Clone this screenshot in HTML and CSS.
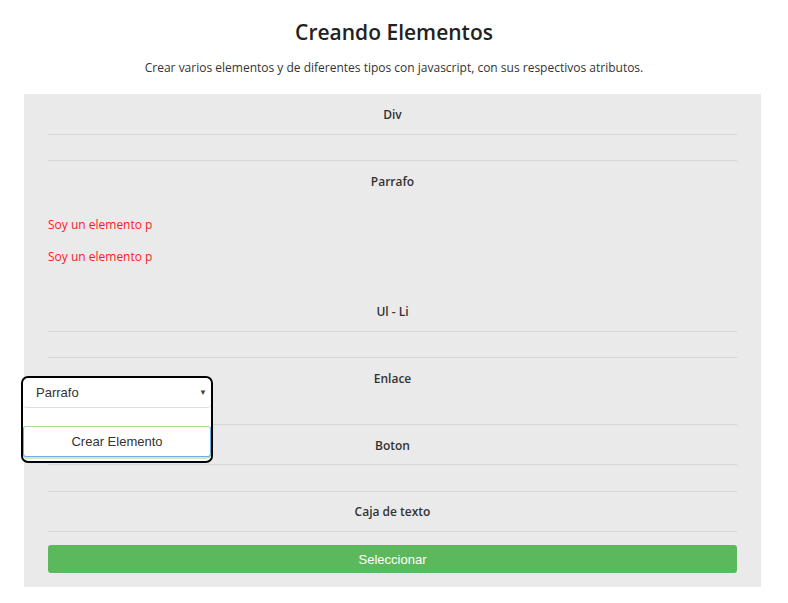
FILE: index.html
```html
<!DOCTYPE html>
<html lang="es">
<head>
<meta charset="utf-8">
<title>Creando Elementos</title>
<link rel="stylesheet" href="styles.css">
</head>
<body>
<header class="header">
  <h1 class="title">Creando Elementos</h1>
  <p class="subtitle">Crear varios elementos y de diferentes tipos con javascript, con sus respectivos atributos.</p>
</header>
<main class="panel">
  <section class="sec">
    <h2 class="sec-title">Div</h2>
    <div class="box-empty"></div>
  </section>
  <section class="sec">
    <h2 class="sec-title">Parrafo</h2>
    <div class="paras">
      <p class="red">Soy un elemento p</p>
      <p class="red">Soy un elemento p</p>
    </div>
  </section>
  <section class="sec sec-ul">
    <h2 class="sec-title">Ul - Li</h2>
    <div class="box-empty"></div>
  </section>
  <section class="sec">
    <h2 class="sec-title">Enlace</h2>
    <div class="enlace-space"></div>
  </section>
  <section class="sec sec-bordered">
    <h2 class="sec-title">Boton</h2>
    <div class="box-empty"></div>
  </section>
  <section class="sec sec-last">
    <h2 class="sec-title">Caja de texto</h2>
    <div class="rule"></div>
    <button class="btn-green" type="button">Seleccionar</button>
  </section>

  <div class="creator">
    <div class="select">
      <span>Parrafo</span>
      <span class="caret">&#9660;</span>
    </div>
    <div class="creator-gap"></div>
    <button class="btn-create" type="button">Crear Elemento</button>
  </div>
</main>
</body>
</html>
```
FILE: styles.css
```css
* { box-sizing: border-box; }
html, body { margin: 0; padding: 0; background: #fff; }
body {
  font-family: "Open Sans", "Noto Sans", sans-serif;
  color: #333;
}
.header { text-align: center; padding-top: 18px; }
.title {
  margin: 0;
  font-size: 21px;
  font-weight: 600;
  line-height: 28px;
  color: #222;
}
.subtitle {
  margin: 13px 0 0;
  font-size: 12px;
  line-height: 18px;
  color: #333;
}
.panel {
  position: relative;
  margin: 17px 0 0 24px;
  width: 737px;
  background: #eaeaea;
  padding: 10px 24px 14px;
}
.sec-title {
  margin: 0;
  padding-top: 1px;
  text-align: center;
  font-size: 12px;
  font-weight: 600;
  line-height: 20px;
  color: #333;
}
.box-empty {
  margin: 9px 0 10px;
  height: 27px;
  border-top: 1px solid #d6d6d6;
  border-bottom: 1px solid #d6d6d6;
}
.paras { padding-top: 23px; padding-bottom: 34px; }
.red {
  margin: 0 0 12px;
  color: #ff1a1a;
  font-size: 12px;
  line-height: 20px;
}
.red:last-child { margin-bottom: 0; }
.enlace-space {
  height: 36px;
  border-bottom: 1px solid #d6d6d6;
  margin-bottom: 10px;
}
.sec-bordered .box-empty { margin-top: 8px; margin-bottom: 9px; height: 28px; }
.rule {
  margin-top: 9px;
  border-top: 1px solid #d6d6d6;
}
.btn-green {
  display: block;
  width: 100%;
  height: 28px;
  margin-top: 13px;
  border: 0;
  border-radius: 3px;
  background: #5cb85c;
  color: #fff;
  font-family: "Liberation Sans", Arial, sans-serif;
  font-size: 13px;
}
.creator {
  position: absolute;
  left: -3px;
  top: 282px;
  width: 192px;
  height: 87px;
  border: 2px solid #000;
  border-radius: 7px;
  background: #fff;
  overflow: hidden;
  display: flex;
  flex-direction: column;
}
.select {
  display: flex;
  align-items: center;
  justify-content: space-between;
  height: 30px;
  padding: 0 4px 0 13px;
  border-bottom: 1px solid #ddd;
  border-radius: 0 0 4px 4px;
  font-family: "Liberation Sans", Arial, sans-serif;
  font-size: 13px;
  color: #333;
}
.caret { font-size: 8px; color: #444; }
.creator-gap { height: 18px; }
.btn-create {
  height: 31px;
  width: 100%;
  margin: 0;
  border: 1px solid #66afe9;
  border-top-color: #a9dc9c;
  border-radius: 3px;
  background: #fff;
  color: #333;
  font-family: "Liberation Sans", Arial, sans-serif;
  font-size: 13px;
  box-shadow: 0 2px 0 #cfeac8;
}
```
